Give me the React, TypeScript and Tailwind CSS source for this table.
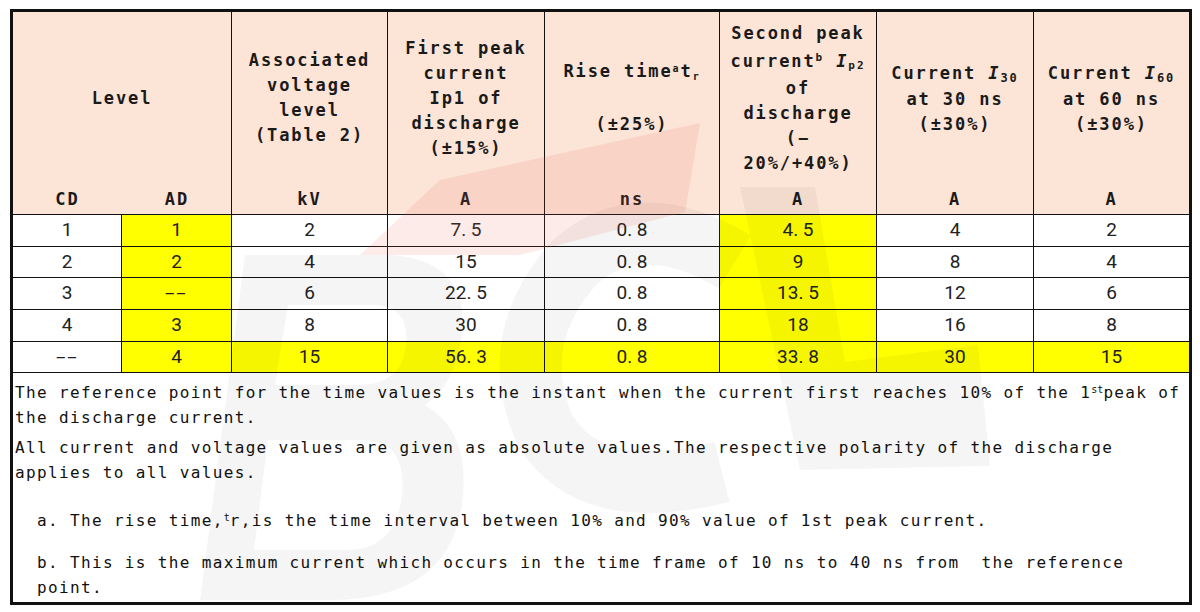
import type { ReactNode } from "react";

const COLS = "grid grid-cols-[109px_110px_156px_157px_175px_157px_157px_155px]";

type Head = { title: ReactNode; unit: string };

const HEADS: Head[] = [
  {
    title: (
      <>
        <div>Associated</div>
        <div>voltage</div>
        <div>level</div>
        <div>(Table 2)</div>
      </>
    ),
    unit: "kV",
  },
  {
    title: (
      <>
        <div>First peak</div>
        <div>current</div>
        <div>Ip1 of</div>
        <div>discharge</div>
        <div>(±15%)</div>
      </>
    ),
    unit: "A",
  },
  {
    title: (
      <>
        <div>
          Rise time<sup className="text-[10px]">a</sup>t<sub className="text-[10px]">r</sub>
        </div>
        <div className="h-[28px]" />
        <div>(±25%)</div>
      </>
    ),
    unit: "ns",
  },
  {
    title: (
      <>
        <div>Second peak</div>
        <div className="leading-[30px]">
          current<sup className="text-[11px]">b</sup> <i>I</i>
          <sub className="text-[11px]">p2</sub>
        </div>
        <div>of</div>
        <div>discharge</div>
        <div>(−</div>
        <div>20%/+40%)</div>
      </>
    ),
    unit: "A",
  },
  {
    title: (
      <>
        <div className="leading-[27px]">
          Current <i>I</i>
          <sub className="text-[12px]">30</sub>
        </div>
        <div>at 30 ns</div>
        <div>(±30%)</div>
      </>
    ),
    unit: "A",
  },
  {
    title: (
      <>
        <div className="leading-[27px]">
          Current <i>I</i>
          <sub className="text-[12px]">60</sub>
        </div>
        <div>at 60 ns</div>
        <div>(±30%)</div>
      </>
    ),
    unit: "A",
  },
];

const ROWS = [
  ["1", "1", "2", "7. 5", "0. 8", "4. 5", "4", "2"],
  ["2", "2", "4", "15", "0. 8", "9", "8", "4"],
  ["3", "--", "6", "22. 5", "0. 8", "13. 5", "12", "6"],
  ["4", "3", "8", "30", "0. 8", "18", "16", "8"],
  ["--", "4", "15", "56. 3", "0. 8", "33. 8", "30", "15"],
];

const ROW_H = ["h-[32px]", "h-[31px]", "h-[32px]", "h-[32px]", "h-[31px]"];

function isYellow(r: number, c: number) {
  if (c === 1 || c === 5) return true;
  return r === ROWS.length - 1 && c > 0;
}

function Cell({ v }: { v: string }) {
  if (v === "--") {
    return <span className="inline-block scale-x-[1.8] tracking-[1px]">--</span>;
  }
  return <>{v}</>;
}

function Watermark() {
  // faint logo watermark lying over the table
  return (
    <svg
      className="pointer-events-none absolute inset-0"
      width="1200"
      height="612"
      viewBox="0 0 1200 612"
    >
      <polygon points="360,255 440,180 700,123 685,212 520,255" fill="#e85a4a" fillOpacity="0.12" />
      <path
        fillRule="evenodd"
        fill="#000"
        fillOpacity="0.038"
        d="M200 600 L245 255 L390 255 Q470 260 462 335 Q455 385 425 405 Q472 432 462 505 Q448 600 330 600 Z M288 305 L275 385 L362 385 Q402 383 406 345 Q410 305 372 305 Z M268 440 L254 550 L350 550 Q396 548 402 495 Q407 440 362 440 Z"
      />
      <path
        d="M735 262 Q640 205 575 262 Q505 340 545 430 Q590 505 722 472"
        fill="none"
        stroke="#000"
        strokeOpacity="0.038"
        strokeWidth="62"
      />
      <polygon
        points="740,187 815,187 845,362 978,345 990,466 800,470"
        fill="#000"
        fillOpacity="0.038"
      />
    </svg>
  );
}

export default function App() {
  return (
    <div className="relative h-[612px] w-[1200px] bg-white pl-[10px] pt-[9px] text-[#1a1a1a]">
      <div className="w-[1182px] border-[3px] border-[#111]">
        {/* header */}
        <div
          className={`${COLS} border-b border-[#111] bg-[#fce4d6] font-['DejaVu_Sans_Mono',monospace] text-[17px] font-bold leading-[25px] tracking-[1.9px]`}
        >
          <div className="col-span-2 flex flex-col border-r border-[#111]">
            <div className="flex h-[172px] items-center justify-center">Level</div>
            <div className="grid h-[30px] grid-cols-[109px_110px] items-center text-center">
              <span>CD</span>
              <span>AD</span>
            </div>
          </div>
          {HEADS.map((h, i) => (
            <div
              key={i}
              className={`flex flex-col ${i < HEADS.length - 1 ? "border-r border-[#111]" : ""}`}
            >
              <div className="flex h-[172px] flex-col items-center justify-center text-center">
                {h.title}
              </div>
              <div className="flex h-[30px] items-center justify-center">{h.unit}</div>
            </div>
          ))}
        </div>

        {/* data rows */}
        {ROWS.map((row, r) => (
          <div
            key={r}
            className={`${COLS} ${ROW_H[r]} border-b border-[#111] font-['Roboto',sans-serif] text-[19px] text-[#222]`}
          >
            {row.map((v, c) => (
              <div
                key={c}
                className={`flex items-center justify-center ${
                  c < row.length - 1 ? "border-r border-[#111]" : ""
                } ${isYellow(r, c) ? "bg-[#ffff00]" : "bg-white"}`}
              >
                <Cell v={v} />
              </div>
            ))}
          </div>
        ))}

        {/* notes */}
        <div className="h-[229px] whitespace-pre pl-[2px] pt-[7px] font-['DejaVu_Sans_Mono',monospace] text-[16px] leading-[25px] tracking-[1.35px] text-[#111]">
          <div>
            The reference point for the time values is the instant when the current first reaches 10% of the 1
            <sup className="text-[10px] tracking-normal">st</sup>peak of
          </div>
          <div>the discharge current.</div>
          <div className="mt-[5px]">
            All current and voltage values are given as absolute values.The respective polarity of the discharge
          </div>
          <div>applies to all values.</div>
          <div className="mt-[23px] pl-[22px]">
            a. The rise time,<sup className="text-[10px] tracking-normal">t</sup>r,is the time interval between 10% and 90% value of 1st peak current.
          </div>
          <div className="mt-[17px] pl-[22px]">
            {"b. This is the maximum current which occurs in the time frame of 10 ns to 40 ns from  the reference"}
          </div>
          <div className="pl-[22px]">point.</div>
        </div>
      </div>
      <Watermark />
    </div>
  );
}
